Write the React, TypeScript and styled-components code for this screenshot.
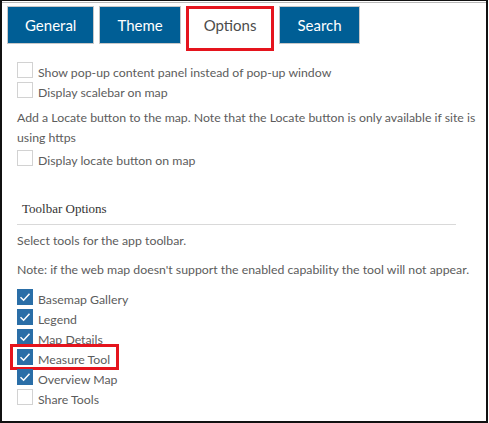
import styled, { createGlobalStyle } from 'styled-components';

const GlobalStyle = createGlobalStyle`
  html, body {
    margin: 0;
    padding: 0;
    background: #fff;
  }
  body {
    font-family: Lato, "Open Sans", sans-serif;
  }
`;

const Frame = styled.div`
  box-sizing: border-box;
  width: 488px;
  height: 423px;
  border: 2px solid #111;
  border-top: 1px solid #111;
  display: flex;
  flex-direction: column;
`;

const TopRule = styled.div`
  height: 1px;
  margin-top: 1px;
  background: #b8b8b8;
`;

const TabBar = styled.div`
  display: flex;
  align-items: flex-start;
  gap: 5px;
  padding: 3px 0 0 5px;
  height: 48px;
  box-sizing: border-box;
`;

const Tab = styled.div<{ $active?: boolean }>`
  box-sizing: border-box;
  height: ${(p) => (p.$active ? '45px' : '38px')};
  padding: ${(p) => (p.$active ? '0 15px 7px' : '0 17px')};
  display: flex;
  align-items: center;
  justify-content: center;
  font-size: 15px;
  color: ${(p) => (p.$active ? '#4c4c4c' : '#fff')};
  background: ${(p) => (p.$active ? '#fff' : '#005e95')};
  border: ${(p) => (p.$active ? '3px solid #e5141d' : '1px solid #c8c8c8')};
`;

const Content = styled.div`
  padding: 12px 0 0 15px;
  color: #5c5c5c;
  font-size: 12.3px;
`;

const CheckRow = styled.label<{ $flagged?: boolean }>`
  display: flex;
  align-items: center;
  gap: 5px;
  height: 20px;
  position: relative;
  ${(p) =>
    p.$flagged &&
    `
    &::after {
      content: '';
      position: absolute;
      left: -7px;
      top: -6px;
      width: 109px;
      height: 26px;
      box-sizing: border-box;
      border: 3px solid #e5141d;
    }
  `}
`;

const Box = styled.span<{ $checked?: boolean }>`
  box-sizing: border-box;
  width: 16px;
  height: 16px;
  flex: none;
  margin-top: -6px;
  border: 1px solid ${(p) => (p.$checked ? '#2a6ea7' : '#d2d2d2')};
  background: ${(p) => (p.$checked ? '#2a6ea7' : '#fff')};
  display: flex;
  align-items: center;
  justify-content: center;
`;

const Label = styled.span`
  line-height: 20px;
`;

const Para = styled.p<{ $gap?: number }>`
  margin: ${(p) => p.$gap ?? 0}px 0 0;
  line-height: 20px;
  padding-right: 4px;
`;

const Section = styled.div<{ $gap: number }>`
  margin-top: ${(p) => p.$gap}px;
`;

const SectionTitle = styled.div`
  font-family: "Liberation Serif", serif;
  font-size: 13px;
  color: #333;
  padding-left: 5px;
  height: 24px;
  line-height: 24px;
`;

const Rule = styled.div`
  width: 439px;
  height: 1px;
  background: #d9d9d9;
  margin: 3px 0 6px;
`;

const Check = () => (
  <svg width="12" height="10" viewBox="0 0 12 10">
    <path d="M1.5 5.2 L4.6 8.2 L10.5 1.8" fill="none" stroke="#fff" strokeWidth="1.5" />
  </svg>
);

const Option = ({ label, checked, flagged }: { label: string; checked?: boolean; flagged?: boolean }) => (
  <CheckRow $flagged={flagged}>
    <Box $checked={checked}>{checked && <Check />}</Box>
    <Label>{label}</Label>
  </CheckRow>
);

const tools = [
  { label: 'Basemap Gallery', checked: true },
  { label: 'Legend', checked: true },
  { label: 'Map Details', checked: true },
  { label: 'Measure Tool', checked: true, flagged: true },
  { label: 'Overview Map', checked: true },
  { label: 'Share Tools', checked: false },
];

const App = () => {
  return (
    <>
      <GlobalStyle />
      <Frame>
        <TopRule />
        <TabBar>
          <Tab>General</Tab>
          <Tab>Theme</Tab>
          <Tab $active>Options</Tab>
          <Tab>Search</Tab>
        </TabBar>
        <Content>
          <Option label="Show pop-up content panel instead of pop-up window" />
          <Option label="Display scalebar on map" />
          <Section $gap={5}>
            <Para>
              Add a Locate button to the map. Note that the Locate button is only available if site is using https
            </Para>
          </Section>
          <Section $gap={3}>
            <Option label="Display locate button on map" />
          </Section>
          <Section $gap={26}>
            <SectionTitle>Toolbar Options</SectionTitle>
            <Rule />
            <Para>Select tools for the app toolbar.</Para>
            <Para $gap={9}>
              Note: if the web map doesn't support the enabled capability the tool will not appear.
            </Para>
          </Section>
          <Section $gap={10}>
            {tools.map((t) => (
              <Option key={t.label} label={t.label} checked={t.checked} flagged={t.flagged} />
            ))}
          </Section>
        </Content>
      </Frame>
    </>
  );
};

export default App;
